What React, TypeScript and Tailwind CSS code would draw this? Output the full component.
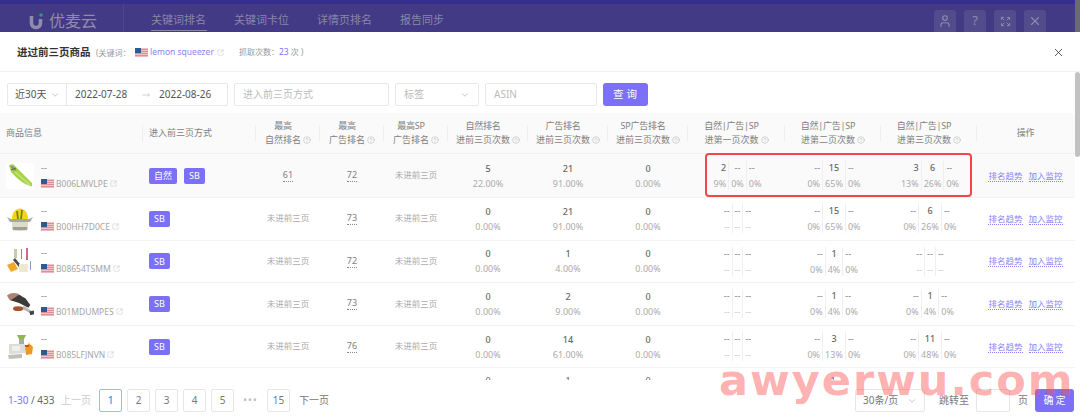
import { ChevronDown, CircleHelp, Expand, MoveRight, SquareArrowOutUpRight, User, X } from "lucide-react";

const GRID = "grid grid-cols-[143px_113px_64px_64px_64px_80px_80px_80px_97px_96px_96px_97px]";

const Flag = ({ w = 13, h = 9 }: { w?: number; h?: number }) => (
    <svg width={w} height={h} viewBox="0 0 13 9" className="shrink-0">
        <rect width="13" height="9" fill="#f2c4c8" />
        <rect y="1" width="13" height="1" fill="#dd8f98" />
        <rect y="3" width="13" height="1" fill="#dd8f98" />
        <rect y="5" width="13" height="1" fill="#dd8f98" />
        <rect y="7" width="13" height="1.2" fill="#dd8f98" />
        <rect width="6" height="5" fill="#2f5a8c" />
    </svg>
);

const Peeler = () => (
    <svg width="28" height="24" viewBox="0 0 28 24">
        <path d="M3 1 L7 0 L13 6 L26 19 Q27 23 24 22 Q15 19 7 10 L5 8 Z" fill="#a9d24a" />
        <path d="M9 8 L24 21" stroke="#c8e47c" strokeWidth="1.5" />
        <path d="M4 2 L7 2 L11 6 L8 7 Z" fill="#8c9488" />
        <path d="M5 6 L10 4" stroke="#5e6a58" strokeWidth="1" />
    </svg>
);
const Juicer = () => (
    <svg width="28" height="26" viewBox="0 0 28 26">
        <path d="M6 13 C6 -1 22 -1 22 13 Z" fill="#f0d415" />
        <path d="M11 5 L12 13 M16 4 L15 13" stroke="#5f7f2c" strokeWidth="1.6" />
        <path d="M1 11 L5 13 L23 13 L27 11 L24 16 L4 16 Z" fill="#a9a89c" />
        <path d="M6 16 L22 16 L22 24 Q14 26 6 24 Z" fill="#dedbcb" />
        <path d="M7 21 L21 21 L21 24 L7 24 Z" fill="#a39f90" />
    </svg>
);
const Tools = () => (
    <svg width="28" height="26" viewBox="0 0 28 26">
        <path d="M8 1 L11 1 L11 10 L8 10 Z" fill="#c9c9b8" />
        <path d="M15 1 L16 1 L16 11 L15 11 Z" fill="#7f9a6a" />
        <path d="M20 0 L22 0 L22 12 L20 12 Z" fill="#c86a8a" />
        <path d="M1 17 L8 14 L12 21 L5 24 Z" fill="#f0a828" />
        <path d="M9 10 L19 22 L17 24 L7 12 Z" fill="#4a4a4a" />
        <path d="M13 16 L22 16 L22 24 L13 24 Z" fill="#eee8d0" />
        <path d="M24 13 L25 13 L25 22 L24 22 Z" fill="#7fa0c8" />
    </svg>
);
const Slicer = () => (
    <svg width="30" height="26" viewBox="0 0 30 26">
        <path d="M1 4 Q6 0 13 2 L18 6 L10 10 L4 9 Z" fill="#b08070" />
        <path d="M5 9 L14 3 L21 7 L26 14 L24 17 L14 12 Z" fill="#3a3a3a" />
        <path d="M19 15 L30 22 L28 24 L17 18 Z" fill="#b8b8b8" />
        <path d="M25 21 L30 20 L30 24 L26 25 Z" fill="#444" />
        <ellipse cx="13" cy="18" rx="5.5" ry="2.5" fill="#a5552e" />
    </svg>
);
const Grinder = () => (
    <svg width="28" height="26" viewBox="0 0 28 26">
        <path d="M11 1 L20 1 L18 5 L13 5 Z" fill="#8eb84a" />
        <path d="M13 5 L18 5 L18 10 L13 10 Z" fill="#a8a8a4" />
        <path d="M3 10 L19 10 L19 19 L3 20 Z" fill="#dcdcd8" />
        <path d="M2 21 L16 20 L16 24 L3 25 Z" fill="#c0c0bc" />
        <path d="M6 12 L14 12 L14 17 L6 17 Z" fill="#f0f0ec" />
        <path d="M19 14 L23 9 L27 13 L26 20 L20 21 Z" fill="#ee9a22" />
        <path d="M19 12 L23 12" stroke="#d14a20" strokeWidth="2" />
    </svg>
);

type Seg = [string, string, string];
type Row = {
    pic: any; asin: string; tags: string[]; top1: string | null; top2: string;
    a: [string, string]; b: [string, string]; c: [string, string];
    p1: [Seg, Seg]; p2: [Seg, Seg]; p3: [Seg, Seg];
};
const none: [Seg, Seg] = [["--", "--", "--"], ["--", "--", "--"]];
const zero: [string, string] = ["0", "0.00%"];

const rows: Row[] = [
    { pic: <Peeler />, asin: "B006LMVLPE", tags: ["自然", "SB"], top1: "61", top2: "72", a: ["5", "22.00%"], b: ["21", "91.00%"], c: zero,
        p1: [["2", "--", "--"], ["9%", "0%", "0%"]], p2: [["--", "15", "--"], ["0%", "65%", "0%"]], p3: [["3", "6", "--"], ["13%", "26%", "0%"]] },
    { pic: <Juicer />, asin: "B00HH7D0CE", tags: ["SB"], top1: null, top2: "73", a: zero, b: ["21", "91.00%"], c: zero,
        p1: none, p2: [["--", "15", "--"], ["0%", "65%", "0%"]], p3: [["--", "6", "--"], ["0%", "26%", "0%"]] },
    { pic: <Tools />, asin: "B08654TSMM", tags: ["SB"], top1: null, top2: "72", a: zero, b: ["1", "4.00%"], c: zero,
        p1: none, p2: [["--", "1", "--"], ["0%", "4%", "0%"]], p3: none },
    { pic: <Slicer />, asin: "B01MDUMPES", tags: ["SB"], top1: null, top2: "73", a: zero, b: ["2", "9.00%"], c: zero,
        p1: none, p2: [["--", "1", "--"], ["0%", "4%", "0%"]], p3: [["--", "1", "--"], ["0%", "4%", "0%"]] },
    { pic: <Grinder />, asin: "B085LFJNVN", tags: ["SB"], top1: null, top2: "76", a: zero, b: ["14", "61.00%"], c: zero,
        p1: none, p2: [["--", "3", "--"], ["0%", "13%", "0%"]], p3: [["--", "11", "--"], ["0%", "48%", "0%"]] },
];

const DIVIDER = "relative after:absolute after:right-0 after:top-[12px] after:h-[17px] after:w-px after:bg-[#efefef]";

function Head({ l1, l2, help, last }: { l1: string; l2?: string; help?: boolean; last?: boolean }) {
    return (
        <div className={"flex flex-col items-center justify-center leading-[14px] text-[9px] text-[#808080] " + (last ? "" : DIVIDER)}>
            <div className={(help ? "pr-[10px] " : "") + "tracking-[-0.2px] whitespace-nowrap"}>{l1}</div>
            {l2 && (
                <div className="flex items-center gap-[2px] whitespace-nowrap">
                    {l2}
                    {help && <CircleHelp size={8} strokeWidth={1.4} className="text-[#aaa]" />}
                </div>
            )}
        </div>
    );
}

function Pair({ v }: { v: [string, string] }) {
    return (
        <div className="flex flex-col items-center justify-center gap-[2px]">
            <div className="text-[9px] leading-[13px] font-medium text-[#666]">{v[0]}</div>
            <div className="text-[9px] leading-[13px] text-[#aaa]">{v[1]}</div>
        </div>
    );
}

function Segs({ v }: { v: [Seg, Seg] }) {
    const cell = (t: string, i: number, top: boolean) => (
        <div key={i + (top ? "t" : "b")} className={
            (i === 0 ? "text-right pr-[2px] " : i === 1 ? "text-center px-[2px] border-x border-[#efefef] " : "text-left pl-[2px] ") +
            (top ? (t === "--" ? "text-[#808080] " : "text-[#666] font-medium ") + "pb-[2px]" : t === "--" ? "text-[#c8c8c8] pt-[1px]" : "text-[#aaa] pt-[1px]")
        }>{t}</div>
    );
    return (
        <div className="flex items-center justify-center pl-[2px]">
            <div className="grid grid-cols-[auto_auto_auto] text-[9px] leading-[13px]">
                {v[0].map((t, i) => cell(t, i, true))}
                {v[1].map((t, i) => cell(t, i, false))}
            </div>
        </div>
    );
}

function Rank({ v }: { v: string }) {
    return (
        <div className="flex items-center justify-center">
            <span className="text-[9px] leading-[12px] text-[#808080] border-b border-dotted border-[#888]">{v}</span>
        </div>
    );
}

const Pager = ({ t, active }: { t: string; active?: boolean }) => (
    <div className={"w-[23px] h-[23px] rounded-[2px] border flex items-center justify-center text-[10px] " + (active ? "border-[#8cc4f5] text-[#3b93e8] font-medium" : "border-[#e6e6e6] text-[#777]")}>{t}</div>
);

export default function App() {
    return (
        <div className="relative w-[1080px] h-[416px] overflow-hidden bg-white flex flex-col font-['Noto_Sans','Noto_Sans_CJK_SC',sans-serif]">
            {/* dimmed page behind the dialog */}
            <div className="h-[32px] shrink-0 bg-[#423a84] border-t-[4px] border-[#352e8e] flex pr-[34px]">
                <div className="w-[124px] h-full border-r border-[#4d4690] flex items-center pl-[29px] pt-[6px] gap-[5px]">
                    <svg width="15" height="17" viewBox="0 0 15 17">
                        <path d="M2.5 3 L2.5 10 C2.5 16 11.5 16 11.5 10 L11.5 6" fill="none" stroke="#8f8bab" strokeWidth="3.6" />
                        <circle cx="12" cy="2" r="1.8" fill="#2f9a78" />
                    </svg>
                    <span className="text-[16px] text-[#8f8bab]">优麦云</span>
                </div>
                <div className="flex ml-[27px] gap-[27px] h-[27px] text-[11px] text-[#8a86aa]">
                    <div className="border-b border-[#8a86aa] flex items-center h-full pt-[6px] w-[56px] whitespace-nowrap">关键词排名</div>
                    <div className="flex items-center pt-[6px] w-[56px] whitespace-nowrap">关键词卡位</div>
                    <div className="flex items-center pt-[6px] w-[56px] whitespace-nowrap">详情页排名</div>
                    <div className="flex items-center pt-[6px] w-[46px] whitespace-nowrap">报告同步</div>
                </div>
                <div className="ml-auto flex gap-[8px] self-end">
                    <div className="w-[22px] h-[22px] rounded-t-[3px] bg-[#524b8c] flex items-center justify-center text-[#8f8bab]"><User size={14} /></div>
                    <div className="w-[22px] h-[22px] rounded-t-[3px] bg-[#524b8c] flex items-center justify-center text-[#8f8bab] text-[13px]">?</div>
                    <div className="w-[22px] h-[22px] rounded-t-[3px] bg-[#524b8c] flex items-center justify-center text-[#8f8bab]"><Expand size={11} /></div>
                    <div className="w-[22px] h-[22px] rounded-t-[3px] bg-[#524b8c] flex items-center justify-center text-[#8f8bab]"><X size={14} /></div>
                </div>
            </div>

            {/* title */}
            <div className="h-[40px] shrink-0 border-b border-[#f1f1f1] flex items-center pl-[17px] pr-[15px] pt-[2px]">
                <span className="text-[10.5px] font-bold text-[#333] w-[79px] whitespace-nowrap">进过前三页商品</span>
                <span className="text-[8px] text-[#999] whitespace-nowrap w-[39px]">(关键词：</span>
                <Flag />
                <span className="text-[8.5px] text-[#8a83f5] ml-[2px] whitespace-nowrap w-[67px]">lemon squeezer</span>
                <SquareArrowOutUpRight size={7} className="text-[#ccc]" />
                <span className="text-[8px] text-[#999] ml-[15px] whitespace-nowrap">抓取次数：<span className="text-[#7c74f5] text-[8.5px]">23</span> 次 )</span>
                <X size={13} strokeWidth={1.6} className="ml-auto text-[#444]" />
            </div>

            {/* filters */}
            <div className="h-[41px] shrink-0 flex items-start pt-[11px] pl-[7px] gap-[6px] text-[10px]">
                <div className="flex h-[23px] w-[221px] border border-[#e8e8e8] rounded-[2px] text-[#555]">
                    <div className="w-[59px] border-r border-[#e8e8e8] flex items-center pl-[7px] gap-[4px]">近30天<ChevronDown size={10} className="text-[#bbb]" /></div>
                    <div className="flex-1 flex items-center pl-[8px]">
                        <span className="w-[67px]">2022-07-28</span>
                        <MoveRight size={8} className="text-[#bbb]" />
                        <span className="ml-[9px]">2022-08-26</span>
                    </div>
                </div>
                <div className="h-[23px] w-[155px] border border-[#e8e8e8] rounded-[2px] flex items-center pl-[8px] text-[#bbb]">进入前三页方式</div>
                <div className="h-[23px] w-[84px] border border-[#e8e8e8] rounded-[2px] flex items-center justify-between px-[8px] text-[#bbb]">标签<ChevronDown size={10} /></div>
                <div className="h-[23px] w-[112px] border border-[#e8e8e8] rounded-[2px] flex items-center pl-[8px] text-[#bbb]">ASIN</div>
                <div className="h-[23px] w-[45px] rounded-[3px] bg-[#7b70f7] flex items-center justify-center text-white text-[10.5px] tracking-[3px] pl-[2px]">查询</div>
            </div>

            {/* table */}
            <div className="flex-1 overflow-hidden relative w-[1075px]">
                <div className={GRID + " h-[41px] bg-[#fafafa] border-b border-[#f1f1f1]"}>
                    <div className={"flex items-center pl-[6px] text-[9px] text-[#808080] " + DIVIDER}>商品信息</div>
                    <div className={"flex items-center pl-[6px] text-[9px] text-[#808080] " + DIVIDER}>进入前三页方式</div>
                    <Head l1="最高" l2="自然排名" help />
                    <Head l1="最高" l2="广告排名" help />
                    <Head l1="最高SP" l2="广告排名" help />
                    <Head l1="自然排名" l2="进前三页次数" help />
                    <Head l1="广告排名" l2="进前三页次数" help />
                    <Head l1="SP广告排名" l2="进前三页次数" help />
                    <Head l1="自然|广告|SP" l2="进第一页次数" help />
                    <Head l1="自然|广告|SP" l2="进第二页次数" help />
                    <Head l1="自然|广告|SP" l2="进第三页次数" help />
                    <Head l1="操作" last />
                </div>
                {rows.map((r, i) => (
                    <div key={r.asin} className={GRID + " border-b border-[#f3f3f3] " + (i === 0 ? "h-[44px] bg-[#fafafa]" : "h-[42.6px]")}>
                        <div className="flex items-center pl-[6px]">
                            <div className="w-[28px] h-[26px] bg-white flex items-center justify-center shrink-0">{r.pic}</div>
                            <div className="ml-[7px]">
                                <div className="text-[9px] leading-[10px] text-[#808080] mb-[5px]">--</div>
                                <div className="flex items-center gap-[2px] text-[8.5px] leading-[11px] text-[#a5a5a5]">
                                    <Flag />
                                    <span>{r.asin}</span>
                                    <SquareArrowOutUpRight size={7} className="text-[#ccc]" />
                                </div>
                            </div>
                        </div>
                        <div className="flex items-center pl-[6px] gap-[7px]">
                            {r.tags.map((t) => (
                                <span key={t} className="h-[16px] px-[5px] rounded-[2px] bg-[#7b70f7] text-white text-[9px] flex items-center">{t}</span>
                            ))}
                        </div>
                        {r.top1 ? <Rank v={r.top1} /> : <div className="flex items-center justify-center text-[8.5px] text-[#aaa]">未进前三页</div>}
                        <Rank v={r.top2} />
                        <div className="flex items-center justify-center text-[8.5px] text-[#aaa]">未进前三页</div>
                        <Pair v={r.a} />
                        <Pair v={r.b} />
                        <Pair v={r.c} />
                        <Segs v={r.p1} />
                        <Segs v={r.p2} />
                        <Segs v={r.p3} />
                        <div className="flex items-center justify-center gap-[6px] text-[8.5px] text-[#8a7ff5]">
                            <span className="border-b border-dotted border-[#8a7ff5] leading-[11px]">排名趋势</span>
                            <span className="border-b border-dotted border-[#8a7ff5] leading-[11px]">加入监控</span>
                        </div>
                    </div>
                ))}
                <div className={GRID + " text-[9px] text-[#666] pt-[6px]"}>
                    <div className="col-start-6 text-center">0</div>
                    <div className="text-center">1</div>
                    <div className="text-center">0</div>
                    <div className="col-start-10 text-center">1</div>
                </div>
                {/* highlight drawn over the first row */}
                <div className="absolute left-[705px] top-[40px] w-[267px] h-[44px] rounded-[4px] border-2 border-[#f0484a]" />
            </div>

            {/* pagination */}
            <div className="h-[36px] shrink-0 bg-white flex items-start pt-[9px] pl-[8px] pr-[6px] text-[10px] z-10">
                <div className="flex items-center h-[23px] w-[53px] text-[#666] whitespace-nowrap"><span className="text-[#7c74f5]">1-30</span>&nbsp;/ 433</div>
                <div className="flex items-center h-[23px] w-[38px] text-[#ccc]">上一页</div>
                <div className="flex gap-[5px]">
                    <Pager t="1" active />
                    <Pager t="2" />
                    <Pager t="3" />
                    <Pager t="4" />
                    <Pager t="5" />
                </div>
                <div className="w-[33px] h-[23px] flex items-center justify-center text-[#bbb] tracking-[1px]">•••</div>
                <Pager t="15" />
                <div className="flex items-center h-[23px] ml-[9px] text-[#777]">下一页</div>
                <div className="ml-auto flex items-center gap-0">
                    <div className="w-[70px] h-[23px] border border-[#e6e6e6] rounded-[2px] flex items-center justify-between px-[7px] text-[#777]">30条/页<ChevronDown size={10} className="text-[#bbb]" /></div>
                    <span className="ml-[14px] text-[#777] w-[37px]">跳转至</span>
                    <div className="w-[34px] h-[23px] border border-[#e6e6e6] rounded-[2px]" />
                    <span className="ml-[8px] text-[#777] w-[17px]">页</span>
                    <div className="w-[39px] h-[23px] rounded-[3px] bg-[#7b70f7] flex items-center justify-center text-white tracking-[2px] pl-[2px]">确定</div>
                </div>
            </div>

            {/* scrollbars */}
            <div className="absolute right-0 top-0 w-[5px] h-[32px] bg-[#6b6b6b]" />
            <div className="absolute right-0 top-[72px] w-[5px] h-[85px] rounded-[3px] bg-[#c2c2c2]" />

            {/* watermark */}
            <div className="absolute left-[719px] top-[355px] z-20 text-[43px] leading-[50px] font-bold text-[#ff5050]/45 font-['DejaVu_Sans',sans-serif] tracking-[2px] whitespace-nowrap pointer-events-none">awyerwu.com</div>
        </div>
    );
}
